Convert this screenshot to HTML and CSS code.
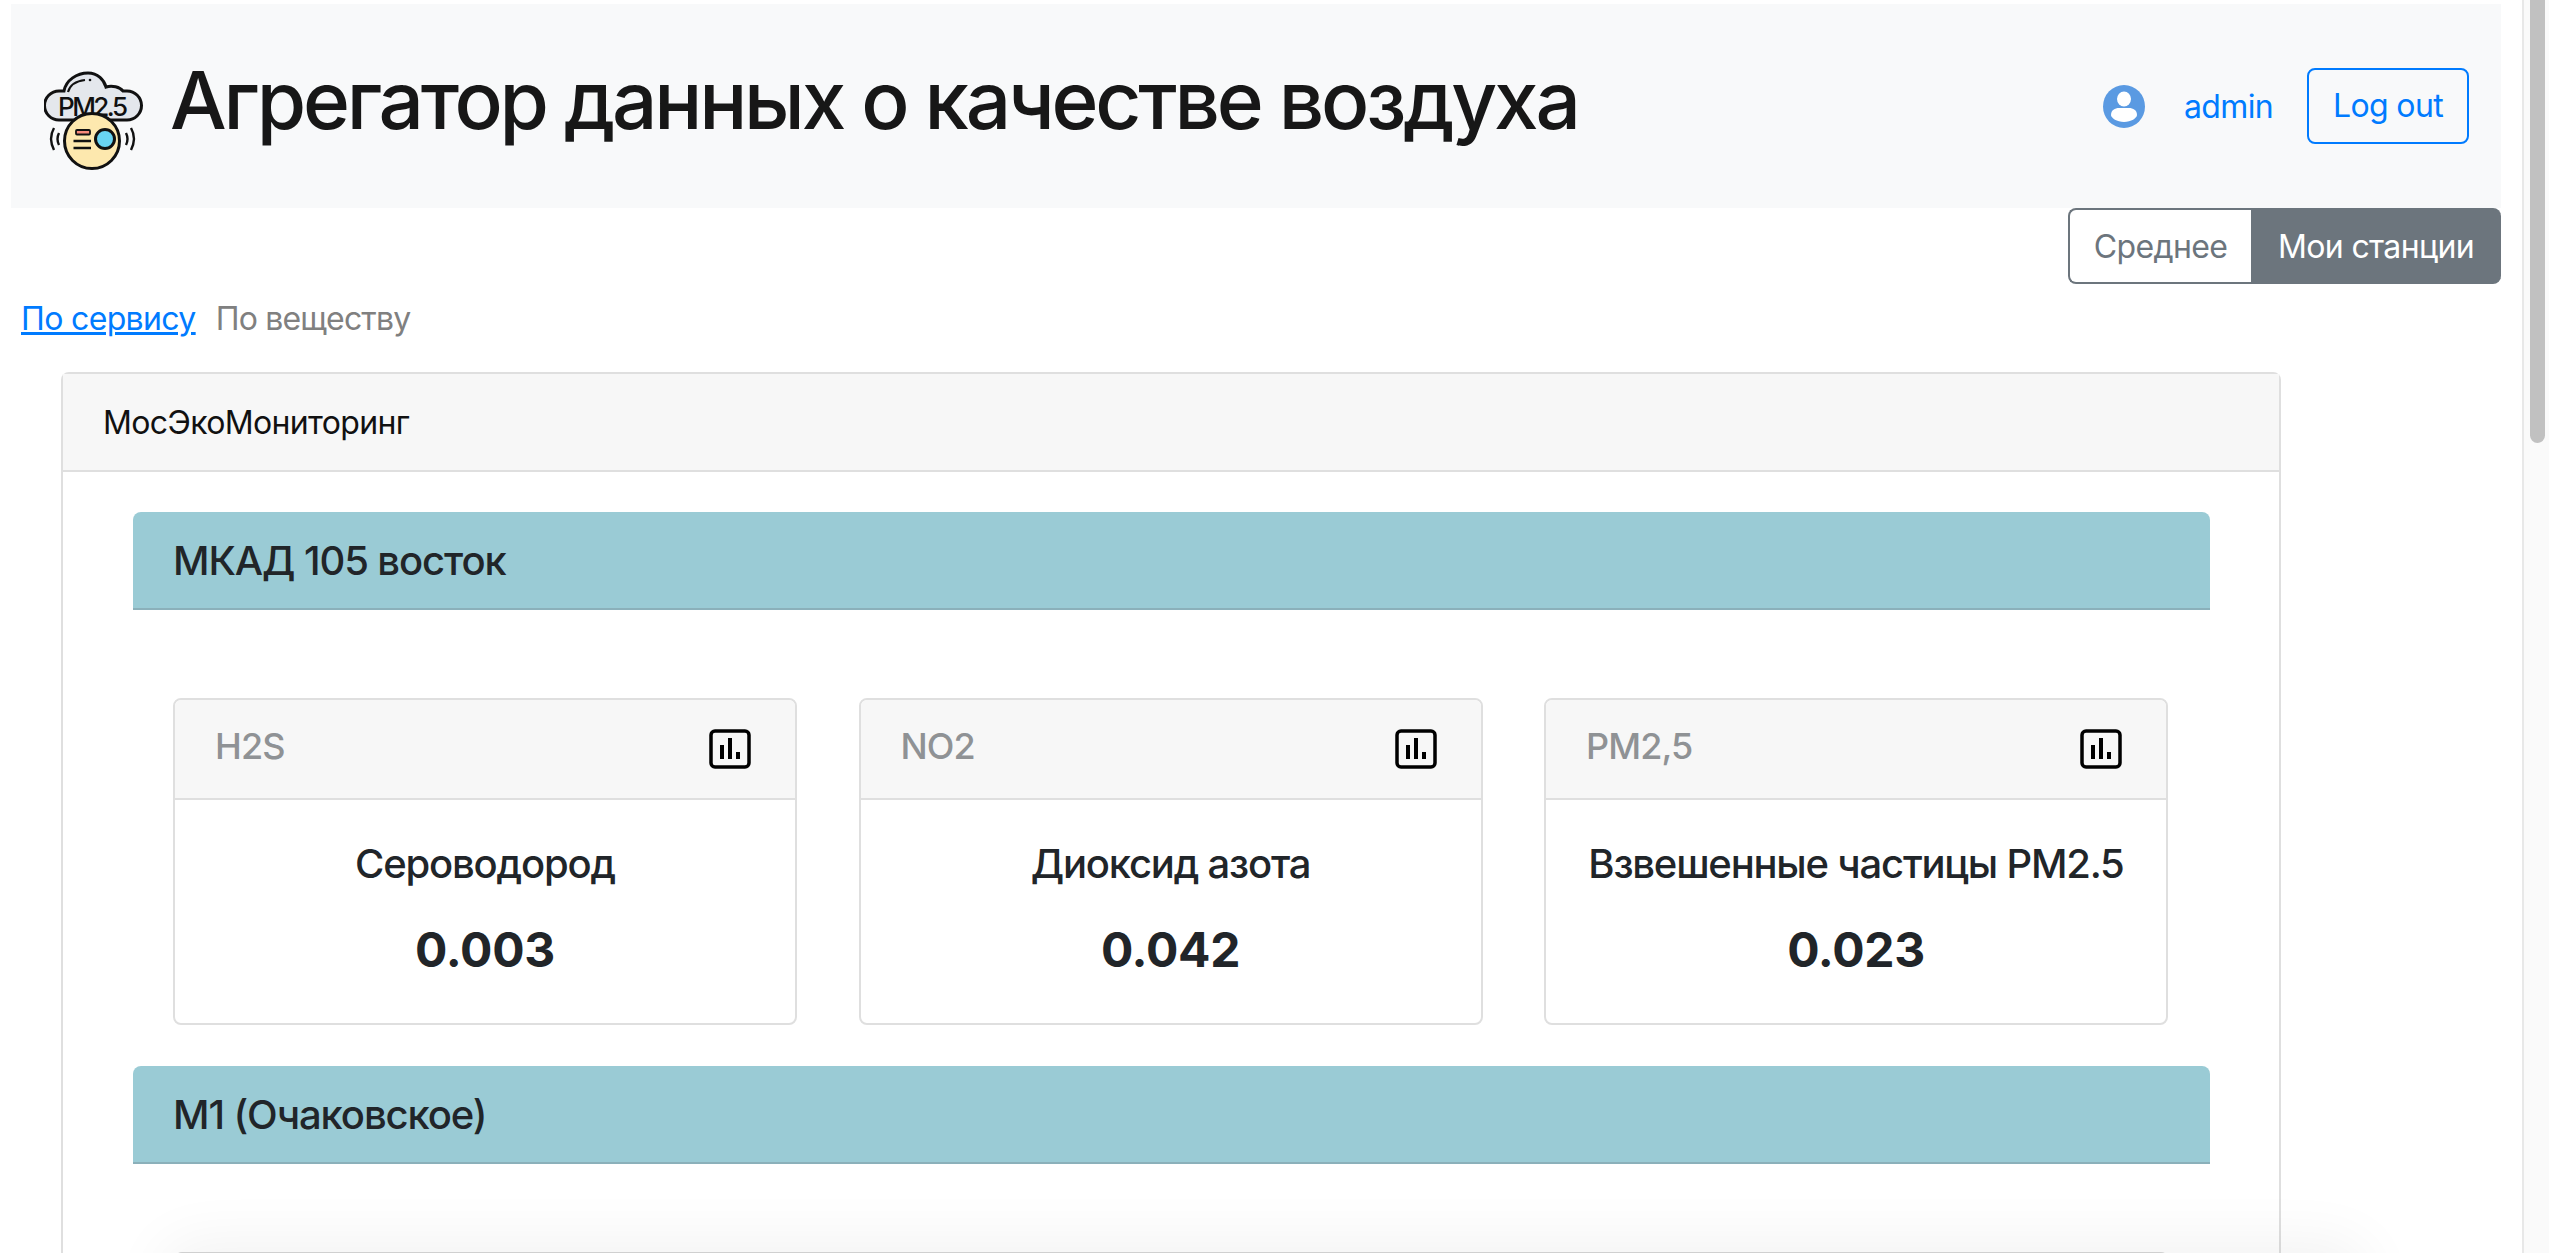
FILE: index.html
```html
<!DOCTYPE html>
<html lang="ru">
<head>
<meta charset="utf-8">
<title>Агрегатор данных о качестве воздуха</title>
<link rel="stylesheet" href="styles.css">
</head>
<body>
<div class="viewport">
  <main class="page">
    <header class="navbar">
      <div class="brand">
        <svg class="logo" viewBox="14 20 100 100" width="100" height="100" aria-hidden="true">
          <path d="M29 70A14.5 14.5 0 0 1 29 41H34C36 30 47 23 58 23C68 23 74 30 76 37C82 35 90 37 93 41H97A14.5 14.5 0 0 1 97 70Z" fill="#e4e7ec" stroke="#111" stroke-width="3"/>
          <path d="M38 42C40 35 46 31 55 30" fill="none" stroke="#111" stroke-width="2.2"/>
          <circle cx="60" cy="30" r="1.300" fill="#111"/>
          <text class="logo-text" x="28" y="65.500" textLength="70">PM2.5</text>
          <circle cx="62" cy="91" r="27.5" fill="#fde8ae" stroke="#111" stroke-width="3"/>
          <rect x="46" y="80" width="14" height="4.5" rx="1" fill="#f98a7c" stroke="#111" stroke-width="1.8"/>
          <path d="M43.500 91H61M43.500 98H61" stroke="#111" stroke-width="2.400" fill="none"/>
          <circle cx="75" cy="89" r="9.500" fill="#68d4f3" stroke="#111" stroke-width="3"/>
          <path d="M24 78C20 85 20 92 24 100M29 83C27 87 27 91 29 95M101 78C105 85 105 92 101 100M96 83C98 87 98 91 96 95" stroke="#111" stroke-width="2.400" fill="none"/>
        </svg>
        <h1 class="title">Агрегатор данных о качестве воздуха</h1>
      </div>
      <nav class="user">
        <svg class="user-icon" viewBox="0 0 42 43" width="42" height="43" aria-hidden="true">
          <ellipse cx="21" cy="21.500" rx="21" ry="21.500" fill="#5a9ae2"/>
          <ellipse cx="21" cy="14" rx="7" ry="7.500" fill="#fff"/>
          <path d="M8 30C8 25 12 23 16 23H26C30 23 34 25 34 30C34 33 28 37 21 37C14 37 8 33 8 30Z" fill="#fff"/>
        </svg>
        <a class="user-name" href="#">admin</a>
        <a class="btn btn-logout" href="#">Log out</a>
      </nav>
    </header>

    <div class="toggle-row">
      <div class="toggle">
        <button class="toggle-btn">Среднее</button>
        <button class="toggle-btn is-active">Мои станции</button>
      </div>
    </div>

    <div class="tabs">
      <a class="tab-link" href="#">По сервису</a>
      <span class="tab-current">По веществу</span>
    </div>

    <section class="service">
      <div class="service-head">МосЭкоМониторинг</div>
      <div class="service-body">
        <h5 class="station">МКАД 105 восток</h5>
        <div class="grid">
          <article class="card">
            <div class="card-head"><span class="code">H2S</span>
              <svg class="chart" viewBox="0 0 42 40" width="42" height="40" aria-hidden="true"><rect x="2" y="2" width="38" height="36" rx="4" fill="none" stroke="#000" stroke-width="3.500"/><path d="M13 30V16M21 30V9M29 30V23" stroke="#000" stroke-width="4" fill="none"/></svg>
            </div>
            <div class="card-body"><div class="name">Сероводород</div><div class="value">0.003</div></div>
          </article>
          <article class="card">
            <div class="card-head"><span class="code">NO2</span>
              <svg class="chart" viewBox="0 0 42 40" width="42" height="40" aria-hidden="true"><rect x="2" y="2" width="38" height="36" rx="4" fill="none" stroke="#000" stroke-width="3.500"/><path d="M13 30V16M21 30V9M29 30V23" stroke="#000" stroke-width="4" fill="none"/></svg>
            </div>
            <div class="card-body"><div class="name">Диоксид азота</div><div class="value">0.042</div></div>
          </article>
          <article class="card">
            <div class="card-head"><span class="code">PM2,5</span>
              <svg class="chart" viewBox="0 0 42 40" width="42" height="40" aria-hidden="true"><rect x="2" y="2" width="38" height="36" rx="4" fill="none" stroke="#000" stroke-width="3.500"/><path d="M13 30V16M21 30V9M29 30V23" stroke="#000" stroke-width="4" fill="none"/></svg>
            </div>
            <div class="card-body"><div class="name">Взвешенные частицы PM2.5</div><div class="value">0.023</div></div>
          </article>
        </div>
        <h5 class="station">М1 (Очаковское)</h5>
        <div class="next-wrap"><div class="next-card"></div></div>
      </div>
    </section>
  </main>
  <div class="scrollbar"><div class="thumb"></div></div>
</div>
</body>
</html>
```

FILE: styles.css
```css
* { box-sizing: border-box; }
html, body { margin: 0; height: 100%; overflow: hidden; background: #fff; }
body { font-family: Inter, Roboto, sans-serif; font-size: 32px; letter-spacing: -0.65px; color: #212529; }
a { text-decoration: none; }

.viewport { display: flex; height: 1253px; overflow: hidden; }
.page { flex: 1; min-width: 0; padding: 4px 21px 0 11px; overflow: hidden; }

.navbar { display: flex; align-items: center; justify-content: space-between; height: 204px; padding: 0 32px 0 33px; background: #f8f9fa; }
.brand { display: flex; align-items: center; }
.logo { margin-top: 28px; flex: none; }
.logo-text { font-size: 26px; font-weight: 500; letter-spacing: 0; fill: #111; }
.title { margin: 0 0 12px 26px; font-size: 80px; font-weight: 500; letter-spacing: -3.2px; line-height: 96px; color: #171717; white-space: nowrap; }
.user { display: flex; align-items: center; }
.user-icon { margin-right: 39px; }
.user-name { color: #007bff; margin-right: 34px; }
.btn { display: block; height: 76px; line-height: 72px; border-radius: 8px; }
.btn-logout { width: 162px; text-align: center; border: 2px solid #007bff; color: #007bff; }

.toggle-row { display: flex; justify-content: flex-end; }
.toggle { display: flex; height: 76px; }
.toggle-btn { font: inherit; letter-spacing: inherit; width: 183px; height: 76px; padding: 0; border: 2px solid #6c757d; border-right: 0; background: #fff; color: #6c757d; border-radius: 8px 0 0 8px; }
.toggle-btn.is-active { width: 250px; padding-right: 2px; background: #6c757d; color: #fff; border-radius: 0 8px 8px 0; }

.tabs { display: flex; gap: 20px; padding: 15px 0 0 10px; height: 88px; line-height: 40px; }
.tab-link { color: #007bff; text-decoration: underline; }
.tab-current { color: #808080; letter-spacing: -0.8px; }

.service { width: 2220px; margin-left: 50px; border: 2px solid #dfdfdf; border-radius: 8px 8px 0 0; border-bottom: 0; }
.service-head { height: 98px; padding: 0 40px; line-height: 98px; background: #f7f7f7; border-bottom: 2px solid #dfdfdf; color: #111; }
.service-body { padding: 40px 69px 0 70px; }
.station { margin: 0; height: 98px; padding: 0 40px; line-height: 97px; font-size: 40px; font-weight: 500; letter-spacing: -1.1px; background: #9acbd5; border-bottom: 2px solid #8bb0ba; border-radius: 8px 8px 0 0; }

.grid { display: grid; grid-template-columns: repeat(3, 624px); gap: 61.5px; padding: 88px 40px 41px; }
.card { height: 327px; border: 2px solid #dfdfdf; border-radius: 8px; background: #fff; }
.card-head { display: flex; align-items: center; justify-content: space-between; height: 100px; padding: 0 44px 0 40px; background: #f7f7f7; border-bottom: 2px solid #dfdfdf; border-radius: 6px 6px 0 0; }
.code { font-size: 36px; font-weight: 500; letter-spacing: -0.9px; color: #8f9295; margin-bottom: 6px; }
.card-body { text-align: center; padding-top: 40px; }
.name { font-size: 40px; font-weight: 500; letter-spacing: -1.2px; line-height: 48px; }
.value { margin-top: 33px; font-size: 48px; font-weight: 700; letter-spacing: -0.3px; line-height: 58px; }

.next-wrap { padding: 88px 41px 0; }
.next-card { height: 400px; border: 2px solid #d0d0d0; border-radius: 8px; background: #fff; box-shadow: 93px 95px 60px 105px rgba(0, 0, 0, .055); }

.scrollbar { flex: none; width: 27px; background: #fafafa; border-left: 2px solid #e8e8e8; padding: 0 4px 0 6px; }
.thumb { height: 443px; background: #c1c1c1; border-radius: 0 0 8px 8px; }
```
